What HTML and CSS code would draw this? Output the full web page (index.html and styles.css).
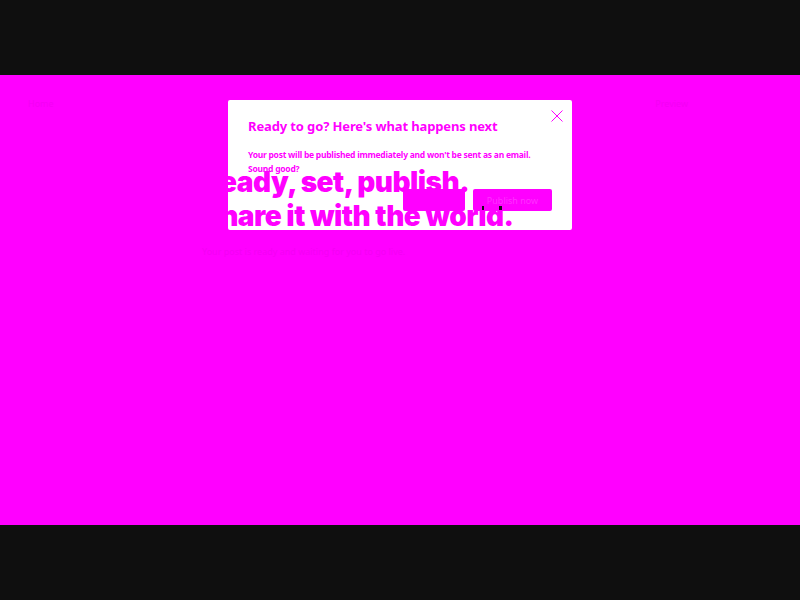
FILE: index.html
```html
<!DOCTYPE html>
<html lang="en">
<head>
    <meta charset="UTF-8">
    <title>Publish</title>
    <link rel="stylesheet" href="styles.css">
</head>
<body>
    <div class="stage">
        <header class="topbar">
            <span class="brand">Home</span>
            <span class="top-link">Preview</span>
        </header>
        <div class="hero">
            <h1>Ready, set, publish.<br>Share it with the world.</h1>
            <p class="hero-sub">Your post is ready and waiting for you to go live.</p>
        </div>
        <div class="modal">
            <div class="modal-head">
                <h2>Ready to go? Here's what happens next</h2>
                <svg class="close" viewBox="0 0 12 12" width="12" height="12">
                    <path d="M.5.5l11 11M11.5.5l-11 11" stroke="#f0f" stroke-width="1" fill="none"/>
                </svg>
            </div>
            <p>Your post will be published immediately and won't be sent as an email.<br>Sound good?</p>
            <div class="modal-actions">
                <button class="btn btn-back">Back to editor</button>
                <button class="btn btn-go">Publish now</button>
            </div>
        </div>
        <span class="speck speck-a"></span>
        <span class="speck speck-b"></span>
    </div>
</body>
</html>
```

FILE: styles.css
```css
body {
    margin: 0;
    background-color: #0f0f0f;
    font-family: "Noto Sans", sans-serif;
}
.stage {
    position: relative;
    height: 450px;
    margin-top: 75px;
    background-color: #f0f;
    overflow: hidden;
}
.topbar {
    display: flex;
    justify-content: space-between;
    padding: 22px 112px 0 28px;
    font-size: 9px;
    color: #f400f4;
}
.hero {
    position: relative;
    z-index: 2;
    margin: 55px 0 0 202px;
}
h1 {
    margin: 0;
    font-family: Inter, sans-serif;
    font-size: 28px;
    font-weight: 900;
    line-height: 34px;
    letter-spacing: -0.5px;
    color: #f0f;
}
.hero-sub {
    margin: 12px 0 0;
    font-size: 9px;
    color: #f400f4;
}
.modal {
    position: absolute;
    top: 25px;
    left: 228px;
    z-index: 1;
    box-sizing: border-box;
    width: 344px;
    height: 130px;
    padding: 17px 20px 0;
    background-color: #fff;
    border-radius: 2px;
    color: #f0f;
}
.modal-head {
    display: flex;
    justify-content: space-between;
}
h2 {
    margin: 0;
    font-size: 13px;
    font-weight: 700;
    line-height: 18px;
    letter-spacing: -0.13px;
}
.close {
    margin: -7px -11px 0 0;
}
.modal p {
    margin: 13px 0 0;
    font-size: 8.5px;
    font-weight: 700;
    line-height: 14px;
    letter-spacing: -0.25px;
}
.modal-actions {
    display: flex;
    justify-content: flex-end;
    gap: 8px;
    margin-top: 13px;
}
.btn {
    height: 22px;
    padding: 0;
    border: 0;
    border-radius: 2px;
    background-color: #f0f;
    color: #f0f;
    font-family: "Noto Sans", sans-serif;
    font-size: 9px;
}
.btn-back {
    width: 62px;
}
.btn-go {
    width: 79px;
    color: #ff30ff;
}
/* the two dark marks at the foot of the main button */
.speck {
    position: absolute;
    top: 131px;
    z-index: 3;
    width: 2px;
    height: 4px;
    background-color: #1a0a1a;
}
.speck-a {
    left: 482px;
}
.speck-b {
    left: 499px;
    width: 3px;
}
```
